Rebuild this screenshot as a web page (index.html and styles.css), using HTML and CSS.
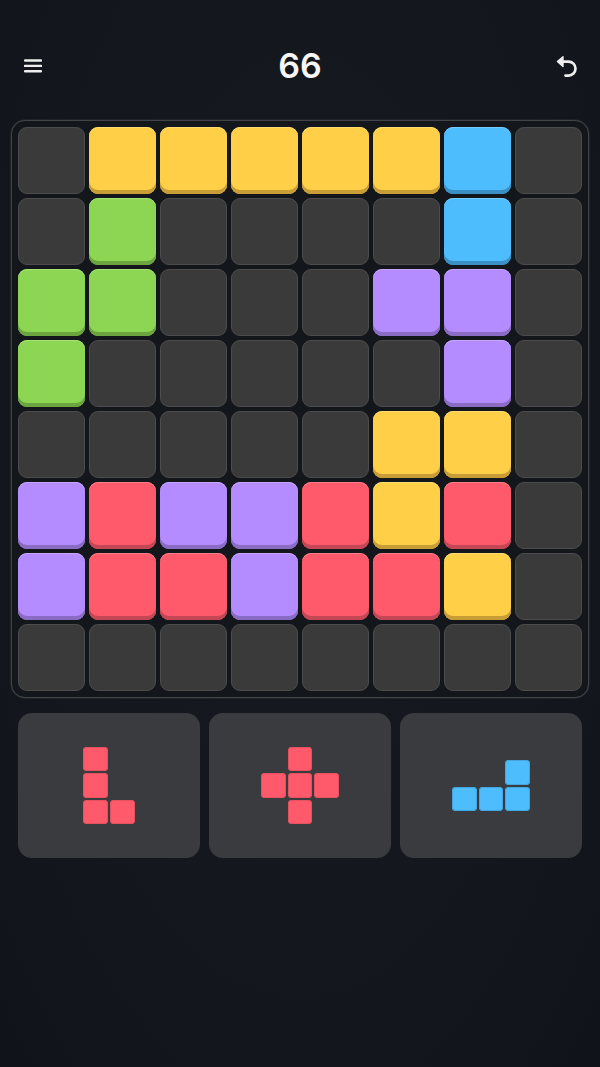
FILE: index.html
```html
<!DOCTYPE html>
<html lang="en">
<head>
<meta charset="utf-8">
<title>Block Puzzle</title>
<link rel="stylesheet" href="styles.css">
</head>
<body>
<main class="app">
  <header class="topbar">
    <button class="icon-btn" aria-label="Menu">
      <svg viewBox="0 0 18 14" width="18" height="14"><path d="M1 1.5H17M1 6.9H17M1 12.3H17" fill="none" stroke="#eeeeee" stroke-width="2.4" stroke-linecap="round"/></svg>
    </button>
    <div class="score">66</div>
    <button class="icon-btn" aria-label="Undo">
      <svg viewBox="0 0 24 24" width="24" height="24"><path d="M7 7.6H13.5A7 7 0 0 1 13.5 21.6H10.5" fill="none" stroke="#eeeeee" stroke-width="2.7" stroke-linecap="round"/><path d="M2.4 7.6L8 2.8V12.6Z" fill="#eeeeee" stroke="#eeeeee" stroke-width="1.4" stroke-linejoin="round"/></svg>
    </button>
  </header>

  <section class="board">
    <div class="cell"></div><div class="cell y"></div><div class="cell y"></div><div class="cell y"></div><div class="cell y"></div><div class="cell y"></div><div class="cell b"></div><div class="cell"></div>
    <div class="cell"></div><div class="cell g"></div><div class="cell"></div><div class="cell"></div><div class="cell"></div><div class="cell"></div><div class="cell b"></div><div class="cell"></div>
    <div class="cell g"></div><div class="cell g"></div><div class="cell"></div><div class="cell"></div><div class="cell"></div><div class="cell p"></div><div class="cell p"></div><div class="cell"></div>
    <div class="cell g"></div><div class="cell"></div><div class="cell"></div><div class="cell"></div><div class="cell"></div><div class="cell"></div><div class="cell p"></div><div class="cell"></div>
    <div class="cell"></div><div class="cell"></div><div class="cell"></div><div class="cell"></div><div class="cell"></div><div class="cell y"></div><div class="cell y"></div><div class="cell"></div>
    <div class="cell p"></div><div class="cell r"></div><div class="cell p"></div><div class="cell p"></div><div class="cell r"></div><div class="cell y"></div><div class="cell r"></div><div class="cell"></div>
    <div class="cell p"></div><div class="cell r"></div><div class="cell r"></div><div class="cell p"></div><div class="cell r"></div><div class="cell r"></div><div class="cell y"></div><div class="cell"></div>
    <div class="cell"></div><div class="cell"></div><div class="cell"></div><div class="cell"></div><div class="cell"></div><div class="cell"></div><div class="cell"></div><div class="cell"></div>
  </section>

  <section class="tray">
    <div class="slot">
      <div class="piece cols-2 red">
        <i></i><b></b>
        <i></i><b></b>
        <i></i><i></i>
      </div>
    </div>
    <div class="slot">
      <div class="piece cols-3 red">
        <b></b><i></i><b></b>
        <i></i><i></i><i></i>
        <b></b><i></i><b></b>
      </div>
    </div>
    <div class="slot">
      <div class="piece cols-3 blue">
        <b></b><b></b><i></i>
        <i></i><i></i><i></i>
      </div>
    </div>
  </section>
</main>
</body>
</html>
```
FILE: styles.css
```css
* { box-sizing: border-box; }

html, body {
  margin: 0;
  height: 100%;
}

body {
  background:
    radial-gradient(ellipse at 50% 40%, #15181f 0%, #14171e 60%, #101319 100%);
  font-family: Inter, "Liberation Sans", sans-serif;
  overflow: hidden;
}

.app {
  width: 600px;
  height: 1067px;
  display: flex;
  flex-direction: column;
}

.topbar {
  height: 120px;
  padding: 11px 21px 0 21px;
  display: flex;
  align-items: center;
  justify-content: space-between;
}

.icon-btn {
  width: 24px;
  height: 24px;
  padding: 0;
  border: 0;
  background: none;
  display: flex;
  align-items: center;
  justify-content: center;
}

.score {
  color: #f6f6f4;
  font-size: 34px;
  font-weight: 600;
  line-height: 40px;
}

.board {
  margin: 0 11px;
  padding: 6px;
  height: 578px;
  display: grid;
  grid-template-columns: repeat(8, 67px);
  grid-auto-rows: 67px;
  gap: 4px;
  background: #13161a;
  border: 1px solid #424447;
  box-shadow: 0 0 0 0.5px #2c2f33;
  border-radius: 14px;
}

.cell {
  border-radius: 9px;
  background: #3a3a3b;
  border: 1px solid #4c4c4d;
}

.cell.y { background: #ffd047; border: 0; box-shadow: inset 0 -4px 0 #c99d36, inset 0 1px 0 #ffdc70; }
.cell.b { background: #4dbdfd; border: 0; box-shadow: inset 0 -4px 0 #3a90c4, inset 0 1px 0 #74ccff; }
.cell.g { background: #8cd653; border: 0; box-shadow: inset 0 -4px 0 #6ca540, inset 0 1px 0 #a6e274; }
.cell.p { background: #b48cff; border: 0; box-shadow: inset 0 -4px 0 #8a6cc4, inset 0 1px 0 #c6a6ff; }
.cell.r { background: #ff5a6b; border: 0; box-shadow: inset 0 -4px 0 #c44755, inset 0 1px 0 #ff7d8a; }

.tray {
  margin: 15px 18px 0;
  display: grid;
  grid-template-columns: repeat(3, 182px);
  gap: 9px;
}

.slot {
  height: 145px;
  border-radius: 14px;
  background: #3a3b3e;
  display: flex;
  align-items: center;
  justify-content: center;
}

.piece {
  display: grid;
  grid-auto-rows: 24.6px;
  gap: 2px;
}

.cols-2 { grid-template-columns: repeat(2, 24.6px); }
.cols-3 { grid-template-columns: repeat(3, 24.6px); }

.piece i {
  display: block;
  border-radius: 4px;
}

.red i { background: #ff5a6b; box-shadow: inset 0 0 0 1px #e5515f; }
.blue i { background: #4dbdfd; box-shadow: inset 0 0 0 1px #43a6de; }
```
